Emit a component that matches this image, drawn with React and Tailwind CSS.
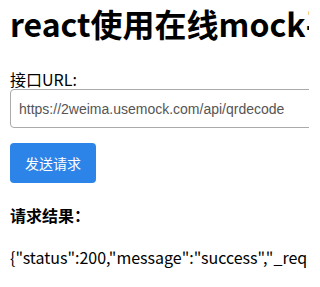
export default function App() {
  return (
    <div className="w-[309px] h-[287px] overflow-hidden bg-white">
      <div className="w-[600px] px-[10px] text-black">
        <h1 className="font-['Noto_Sans_CJK_SC',sans-serif] text-[32px] font-bold leading-[40px] pt-[3px] whitespace-nowrap">
          react使用在线mock平台
        </h1>
        <div className="mt-[26px] font-['Noto_Sans_CJK_SC',sans-serif] text-[16px] leading-[20px]">接口URL:</div>
        <input
          readOnly
          value="https://2weima.usemock.com/api/qrdecode"
          className="block w-[420px] h-[39px] px-[8px] border border-[#aaaaaa] rounded-[4px] font-['Liberation_Sans',Arial,sans-serif] text-[14px] text-[#555555] outline-none"
        />
        <button className="mt-[15px] w-[86px] h-[40px] rounded-[4px] bg-[#2c84e8] text-white text-[14px] font-['Noto_Sans_CJK_SC',sans-serif]">
          发送请求
        </button>
        <div className="mt-[22px] font-['Noto_Sans_CJK_SC',sans-serif] text-[16px] font-bold leading-[20px]">请求结果：</div>
        <div className="mt-[22px] font-['Noto_Sans_CJK_SC',sans-serif] text-[16px] leading-[20px] whitespace-nowrap">
          {'{"status":200,"message":"success","_req'}
        </div>
      </div>
    </div>
  );
}
